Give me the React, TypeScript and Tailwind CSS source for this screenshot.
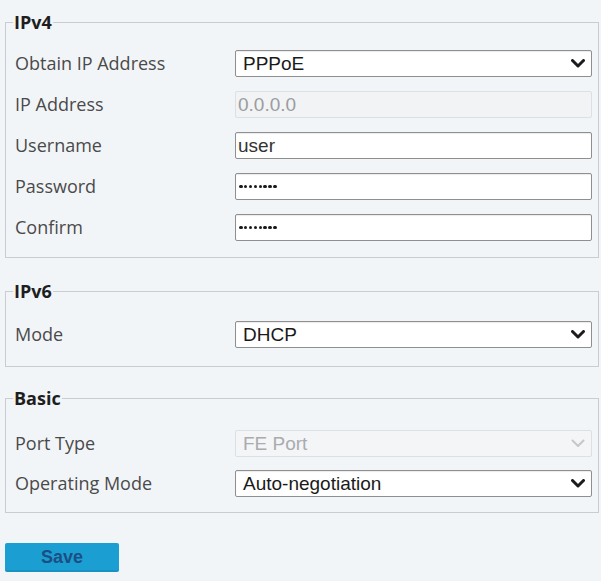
import React from "react";

const labelCls = "w-[220px] shrink-0 text-[18px] leading-[27px] text-[#4a4a4a]";
const fontLabel = { fontFamily: '"Open Sans", "Noto Sans", sans-serif' } as React.CSSProperties;

function Chevron({ disabled }: { disabled?: boolean }) {
  return (
    <svg width="14" height="9" viewBox="0 0 14 9" className="mr-[6px]">
      <path
        d="M1.5 1.5 L7 7 L12.5 1.5"
        fill="none"
        stroke={disabled ? "#c4c8cc" : "#1c1c1c"}
        strokeWidth={disabled ? 2 : 3}
        strokeLinecap="round"
        strokeLinejoin="round"
      />
    </svg>
  );
}

function SelectBox({ value, disabled }: { value: string; disabled?: boolean }) {
  return (
    <div
      className={
        "flex h-[27px] w-[357px] items-center justify-between rounded-[2px] border pl-[7px] text-[19px] leading-none " +
        (disabled
          ? "border-[#dcdfe3] bg-[#f3f5f7] text-[#a9acaf]"
          : "border-[#8f8f8f] bg-white text-[#1a1a1a] shadow-[inset_0_1px_1px_rgba(0,0,0,0.08)]")
      }
      style={{ fontFamily: '"Liberation Sans", Arial, sans-serif' }}
    >
      <span>{value}</span>
      <Chevron disabled={disabled} />
    </div>
  );
}

function TextBox({ value, disabled, password }: { value: string; disabled?: boolean; password?: boolean }) {
  return (
    <div
      className={
        "flex h-[27px] w-[357px] items-center rounded-[2px] border pl-[2px] " +
        (disabled
          ? "border-[#dcdfe3] bg-[#f1f3f5] text-[#9a9da0]"
          : "border-[#8f8f8f] bg-white text-[#333] shadow-[inset_0_1px_1px_rgba(0,0,0,0.08)]")
      }
      style={{ fontFamily: '"Liberation Sans", Arial, sans-serif' }}
    >
      {password ? (
        <span className="ml-px flex gap-[1.3px]">
          {Array.from({ length: 8 }).map((_, i) => (
            <span key={i} className="block h-[3.6px] w-[3.6px] rounded-full bg-[#1a1a1a]" />
          ))}
        </span>
      ) : (
        <span className="text-[19px] leading-none">{value}</span>
      )}
    </div>
  );
}

function Row({ label, children }: { label: string; children: React.ReactNode }) {
  return (
    <div className="flex items-center">
      <div className={labelCls} style={fontLabel}>
        {label}
      </div>
      {children}
    </div>
  );
}

function Legend({ text }: { text: string }) {
  return (
    <legend
      className="ml-[-2px] px-px text-[18px] font-bold leading-[18px] text-[#1e1e1e]"
      style={{ fontFamily: '"Open Sans", "Noto Sans", sans-serif' }}
    >
      {text}
    </legend>
  );
}

export default function App() {
  return (
    <div className="h-[581px] w-[601px] overflow-hidden bg-[#f2f5f8] pt-[13px]">
      <fieldset className="ml-[5px] w-[594px] border border-[#c9cdd1] pb-[16px] pl-[9px] pt-[19px]">
        <Legend text="IPv4" />
        <div className="flex flex-col gap-[14px]">
          <Row label="Obtain IP Address">
            <SelectBox value="PPPoE" />
          </Row>
          <Row label="IP Address">
            <TextBox value="0.0.0.0" disabled />
          </Row>
          <Row label="Username">
            <TextBox value="user" />
          </Row>
          <Row label="Password">
            <TextBox value="" password />
          </Row>
          <Row label="Confirm">
            <TextBox value="" password />
          </Row>
        </div>
      </fieldset>

      <fieldset className="ml-[5px] mt-[24px] w-[594px] border border-[#c9cdd1] pb-[18px] pl-[9px] pt-[21px]">
        <Legend text="IPv6" />
        <Row label="Mode">
          <SelectBox value="DHCP" />
        </Row>
      </fieldset>

      <fieldset className="ml-[5px] mt-[22px] w-[594px] border border-[#c9cdd1] pb-[15px] pl-[9px] pt-[23px]">
        <Legend text="Basic" />
        <div className="flex flex-col gap-[13px]">
          <Row label="Port Type">
            <SelectBox value="FE Port" disabled />
          </Row>
          <Row label="Operating Mode">
            <SelectBox value="Auto-negotiation" />
          </Row>
        </div>
      </fieldset>

      <button
        className="ml-[5px] mt-[30px] h-[29px] w-[114px] rounded-[2px] bg-[#1b9fd3] text-[18px] font-bold text-[#1b4f84] shadow-[inset_0_-2px_0_rgba(0,0,0,0.08)]"
        style={{ fontFamily: '"Liberation Sans", Arial, sans-serif' }}
      >
        Save
      </button>
    </div>
  );
}
